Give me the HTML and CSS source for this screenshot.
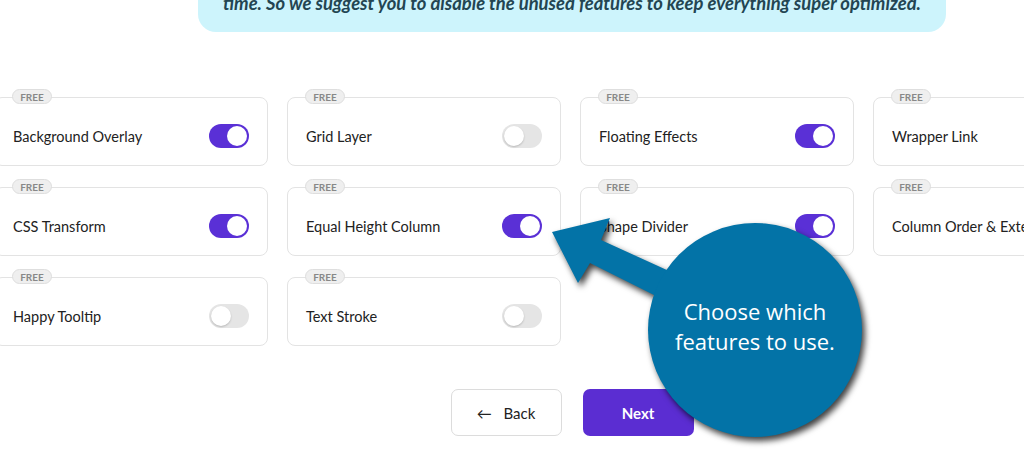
FILE: index.html
```html
<!doctype html>
<html lang="en-us">

<head>
    <title>Happy Addons | Features</title>
    <meta charset="utf-8" />
    <meta name="viewport" content="width=device-width, initial-scale=1.0" />
    <link rel="stylesheet" href="styles.css">
</head>

<body>
    <div class="page">
        <div class="notice">
            <p>Every feature you enable adds a little to your page load<br>
                time. So we suggest you to disable the unused features to keep everything super optimized.</p>
        </div>

        <div class="features">
            <div class="card"><span class="badge">FREE</span><span class="name">Background Overlay</span><span class="toggle on"></span></div>
            <div class="card"><span class="badge">FREE</span><span class="name">Grid Layer</span><span class="toggle"></span></div>
            <div class="card"><span class="badge">FREE</span><span class="name">Floating Effects</span><span class="toggle on"></span></div>
            <div class="card"><span class="badge">FREE</span><span class="name">Wrapper Link</span><span class="toggle on"></span></div>

            <div class="card"><span class="badge">FREE</span><span class="name">CSS Transform</span><span class="toggle on"></span></div>
            <div class="card"><span class="badge">FREE</span><span class="name">Equal Height Column</span><span class="toggle on"></span></div>
            <div class="card"><span class="badge">FREE</span><span class="name">Shape Divider</span><span class="toggle on"></span></div>
            <div class="card"><span class="badge">FREE</span><span class="name">Column Order &amp; Extension</span><span class="toggle on"></span></div>

            <div class="card"><span class="badge">FREE</span><span class="name">Happy Tooltip</span><span class="toggle"></span></div>
            <div class="card"><span class="badge">FREE</span><span class="name">Text Stroke</span><span class="toggle"></span></div>
        </div>

        <div class="actions">
            <button class="btn back"><span class="arrow">&larr;</span> Back</button>
            <button class="btn next">Next</button>
        </div>
    </div>

    <!-- annotation bubble over the screenshot -->
    <div class="callout">
        <svg width="340" height="240" viewBox="540 210 340 240">
            <g class="bubble">
                <polygon points="552,232 610,218 601,240 680,276 668,302 590,263 578,283" />
                <circle cx="755" cy="330" r="107" />
            </g>
        </svg>
        <p class="callout-text">Choose which<br>features to use.</p>
    </div>
</body>

</html>
```

FILE: styles.css
```css
html,
body {
    margin: 0;
    overflow: hidden;
    background-color: #fff;
}

body {
    font-family: "Lato", "Noto Sans", sans-serif;
    color: #222;
    height: 456px;
    position: relative;
}

.page {
    width: 1156px;
    margin-left: -6px;
}

.notice {
    width: 748px;
    margin: -56px auto 0;
    padding: 20px 10px 16px;
    box-sizing: border-box;
    background-color: #cdf4fc;
    border-radius: 0 0 18px 18px;
}

.notice p {
    margin: 0;
    font-size: 18.4px;
    line-height: 26px;
    font-weight: bold;
    font-style: italic;
    color: #234552;
    text-align: center;
    white-space: nowrap;
}

.features {
    display: grid;
    grid-template-columns: repeat(4, 274px);
    column-gap: 19px;
    row-gap: 21px;
    margin-top: 65px;
}

.card {
    position: relative;
    height: 69px;
    box-sizing: border-box;
    border: 1px solid #e3e3e3;
    border-radius: 8px;
    padding: 9px 18px 0;
    display: flex;
    align-items: center;
    justify-content: space-between;
}

.badge {
    position: absolute;
    top: -9px;
    left: 17px;
    width: 40px;
    height: 15px;
    line-height: 15px;
    box-sizing: border-box;
    border: 1px solid #dedede;
    border-radius: 8px;
    background-color: #efefef;
    color: #888;
    font-size: 10px;
    font-weight: bold;
    text-align: center;
}

.name {
    font-size: 14.5px;
    white-space: nowrap;
}

.toggle {
    position: relative;
    flex: none;
    width: 40px;
    height: 24px;
    border-radius: 12px;
    background-color: #e5e5e5;
}

.toggle::after {
    content: "";
    position: absolute;
    top: 2px;
    left: 2px;
    width: 20px;
    height: 20px;
    border-radius: 50%;
    background-color: #fff;
    box-shadow: 0 1px 2px rgba(0, 0, 0, 0.2);
}

.toggle.on {
    background-color: #5a30d6;
}

.toggle.on::after {
    left: 18px;
    box-shadow: none;
}

.actions {
    display: flex;
    justify-content: center;
    gap: 21px;
    margin-top: 43px;
}

.btn {
    width: 111px;
    height: 47px;
    border-radius: 7px;
    font-family: "Lato", "Noto Sans", sans-serif;
    font-size: 15px;
    cursor: pointer;
}

.back {
    background-color: #fff;
    border: 1px solid #dcdcdc;
    color: #222;
}

.back .arrow {
    margin-right: 8px;
}

.next {
    background-color: #5b2dd2;
    border: none;
    color: #fff;
    font-weight: bold;
}

.callout {
    position: absolute;
    left: 540px;
    top: 210px;
    width: 340px;
    height: 240px;
}

.callout svg {
    display: block;
}

.bubble {
    fill: #0373a7;
    filter: drop-shadow(3px 4px 3px rgba(0, 0, 0, 0.75));
}

.callout-text {
    position: absolute;
    left: 115px;
    top: 86px;
    width: 200px;
    margin: 0;
    font-family: "Open Sans", sans-serif;
    font-size: 22px;
    line-height: 30px;
    color: #fff;
    text-align: center;
}
```
